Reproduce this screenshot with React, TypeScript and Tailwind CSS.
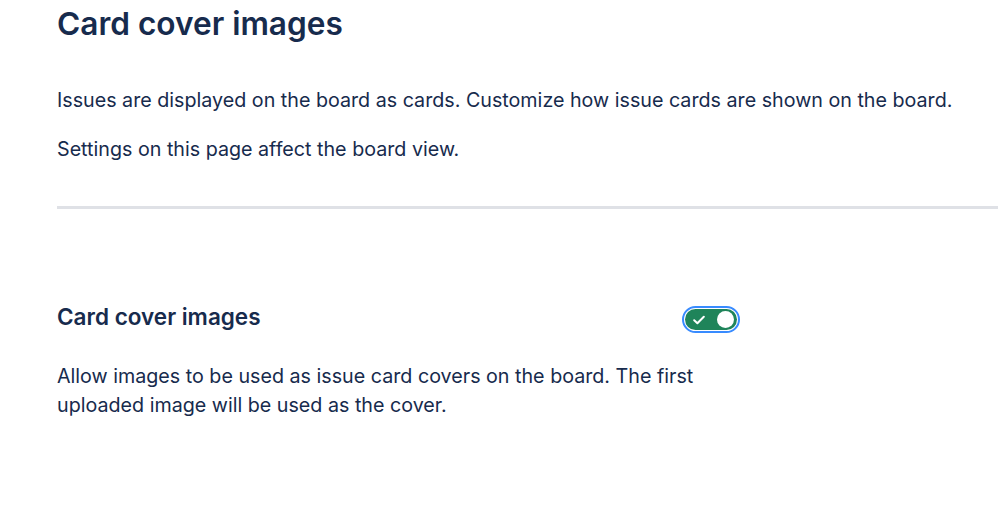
import React from "react";

export default function App() {
  return (
    <div
      className="w-[998px] h-[510px] bg-white overflow-hidden text-[#172B4D]"
      style={{ fontFamily: "Inter, 'Noto Sans', sans-serif" }}
    >
      <div className="pl-[57px]">
        <h1 className="text-[31.6px] leading-[48px] font-semibold">Card cover images</h1>
        <p className="mt-[38px] text-[19.7px] leading-[28px]">
          Issues are displayed on the board as cards. Customize how issue cards are shown on the board.
        </p>
        <p className="mt-[21px] text-[19.7px] leading-[28px]">Settings on this page affect the board view.</p>
        <div className="mt-[43px] h-[3px] bg-[#DFE1E6]" />
        <div className="w-[683px] mt-[94px]">
          <div className="flex items-start justify-between">
            <h2 className="text-[22.5px] leading-[28px] font-semibold">Card cover images</h2>
            <div className="mt-[3px] w-[58px] h-[27px] rounded-full border-[2.5px] border-[#388BFF] p-[1px] flex">
              <div className="flex-1 rounded-full bg-[#1F845A] flex items-center justify-between pl-[8px] pr-[3px]">
                <svg width="12" height="10" viewBox="0 0 12 10" fill="none">
                  <path d="M1.2 5.2L4.4 8.2L10.8 1.8" stroke="white" strokeWidth="2" strokeLinecap="round" strokeLinejoin="round" />
                </svg>
                <div className="w-[17px] h-[17px] rounded-full bg-white" />
              </div>
            </div>
          </div>
          <p className="mt-[29px] w-[650px] text-[19.7px] leading-[29px]">
            Allow images to be used as issue card covers on the board. The first uploaded image will be used as the cover.
          </p>
        </div>
      </div>
    </div>
  );
}
